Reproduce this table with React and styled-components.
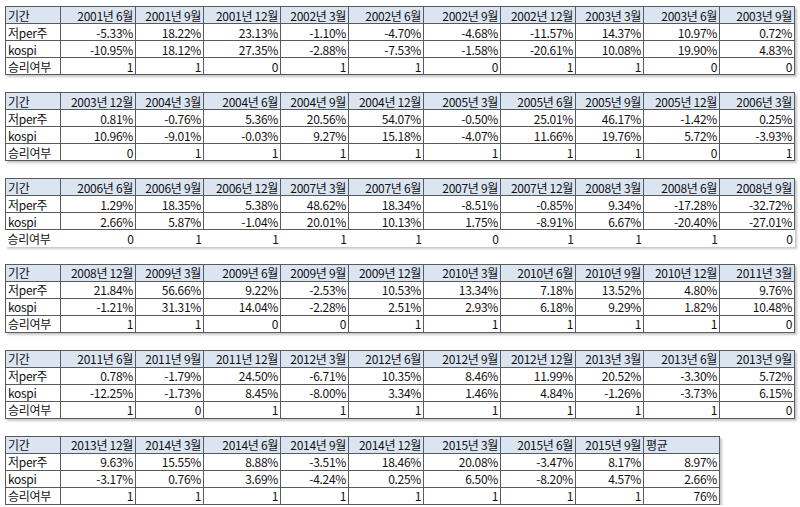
import styled, { createGlobalStyle } from "styled-components";

const GlobalStyle = createGlobalStyle`
  body {
    margin: 0;
    background: #ffffff;
    font-family: "Noto Sans CJK KR", "Noto Sans", sans-serif;
  }
`

const COLS = [55, 75, 68, 77, 68, 75, 77, 75, 68, 76, 75];

const TABLES = [
  {
    periods: ['2001년 6월', '2001년 9월', '2001년 12월', '2002년 3월', '2002년 6월', '2002년 9월', '2002년 12월', '2003년 3월', '2003년 6월', '2003년 9월'],
    per: ['-5.33%', '18.22%', '23.13%', '-1.10%', '-4.70%', '-4.68%', '-11.57%', '14.37%', '10.97%', '0.72%'],
    kospi: ['-10.95%', '18.12%', '27.35%', '-2.88%', '-7.53%', '-1.58%', '-20.61%', '10.08%', '19.90%', '4.83%'],
    win: ['1', '1', '0', '1', '1', '0', '1', '1', '0', '0'],
  },
  {
    periods: ['2003년 12월', '2004년 3월', '2004년 6월', '2004년 9월', '2004년 12월', '2005년 3월', '2005년 6월', '2005년 9월', '2005년 12월', '2006년 3월'],
    per: ['0.81%', '-0.76%', '5.36%', '20.56%', '54.07%', '-0.50%', '25.01%', '46.17%', '-1.42%', '0.25%'],
    kospi: ['10.96%', '-9.01%', '-0.03%', '9.27%', '15.18%', '-4.07%', '11.66%', '19.76%', '5.72%', '-3.93%'],
    win: ['0', '1', '1', '1', '1', '1', '1', '1', '0', '1'],
  },
  {
    periods: ['2006년 6월', '2006년 9월', '2006년 12월', '2007년 3월', '2007년 6월', '2007년 9월', '2007년 12월', '2008년 3월', '2008년 6월', '2008년 9월'],
    per: ['1.29%', '18.35%', '5.38%', '48.62%', '18.34%', '-8.51%', '-0.85%', '9.34%', '-17.28%', '-32.72%'],
    kospi: ['2.66%', '5.87%', '-1.04%', '20.01%', '10.13%', '1.75%', '-8.91%', '6.67%', '-20.40%', '-27.01%'],
    win: ['0', '1', '1', '1', '1', '0', '1', '1', '1', '0'],
    bareLast: true,
  },
  {
    periods: ['2008년 12월', '2009년 3월', '2009년 6월', '2009년 9월', '2009년 12월', '2010년 3월', '2010년 6월', '2010년 9월', '2010년 12월', '2011년 3월'],
    per: ['21.84%', '56.66%', '9.22%', '-2.53%', '10.53%', '13.34%', '7.18%', '13.52%', '4.80%', '9.76%'],
    kospi: ['-1.21%', '31.31%', '14.04%', '-2.28%', '2.51%', '2.93%', '6.18%', '9.29%', '1.82%', '10.48%'],
    win: ['1', '1', '0', '0', '1', '1', '1', '1', '1', '0'],
  },
  {
    periods: ['2011년 6월', '2011년 9월', '2011년 12월', '2012년 3월', '2012년 6월', '2012년 9월', '2012년 12월', '2013년 3월', '2013년 6월', '2013년 9월'],
    per: ['0.78%', '-1.79%', '24.50%', '-6.71%', '10.35%', '8.46%', '11.99%', '20.52%', '-3.30%', '5.72%'],
    kospi: ['-12.25%', '-1.73%', '8.45%', '-8.00%', '3.34%', '1.46%', '4.84%', '-1.26%', '-3.73%', '6.15%'],
    win: ['1', '0', '1', '1', '1', '1', '1', '1', '1', '0'],
  },
  {
    periods: ['2013년 12월', '2014년 3월', '2014년 6월', '2014년 9월', '2014년 12월', '2015년 3월', '2015년 6월', '2015년 9월', '평균'],
    per: ['9.63%', '15.55%', '8.88%', '-3.51%', '18.46%', '20.08%', '-3.47%', '8.17%', '8.97%'],
    kospi: ['-3.17%', '0.76%', '3.69%', '-4.24%', '0.25%', '6.50%', '-8.20%', '4.57%', '2.66%'],
    win: ['1', '1', '1', '1', '1', '1', '1', '1', '76%'],
  },
];

const Sheet = styled.div`
  display: flex;
  flex-direction: column;
  gap: 17px;
  padding: 6px 0 0 5px;
`

const Table = styled.table`
  border-collapse: collapse;
  table-layout: fixed;
  box-shadow: 2px 2px 2px rgba(0, 0, 0, 0.22);
  font-size: 12px;
  color: #111;
`

const Row = styled.tr`
  height: 17px;
`

const Cell = styled.td`
  border: ${props => props.bare ? 'none' : '1px solid #5a5a5a'};
  background: ${props => props.head ? '#dbe5f1' : 'transparent'};
  text-align: ${props => props.left ? 'left' : 'right'};
  padding: 0 2px;
  line-height: 15px;
  white-space: nowrap;
  overflow: hidden;
  letter-spacing: -0.3px;
`

const DataRow = ({ label, values, bare }) => (
  <Row>
    <Cell left bare={bare}>{label}</Cell>
    {values.map((v, i) => <Cell key={i} bare={bare}>{v}</Cell>)}
  </Row>
)

const App = () => {
  return (
    <>
      <GlobalStyle />
      <Sheet>
        {TABLES.map((t, idx) => (
          <Table key={idx} style={{ width: COLS.slice(0, t.periods.length + 1).reduce((a, b) => a + b, 0) }}>
            <colgroup>
              {COLS.slice(0, t.periods.length + 1).map((w, i) => <col key={i} style={{ width: w }} />)}
            </colgroup>
            <tbody>
              <Row>
                <Cell head left>기간</Cell>
                {t.periods.map((p, i) => (
                  <Cell key={i} head left={p === '평균'}>{p}</Cell>
                ))}
              </Row>
              <DataRow label="저per주" values={t.per} />
              <DataRow label="kospi" values={t.kospi} />
              <DataRow label="승리여부" values={t.win} bare={t.bareLast} />
            </tbody>
          </Table>
        ))}
      </Sheet>
    </>
  )
}

export default App;
